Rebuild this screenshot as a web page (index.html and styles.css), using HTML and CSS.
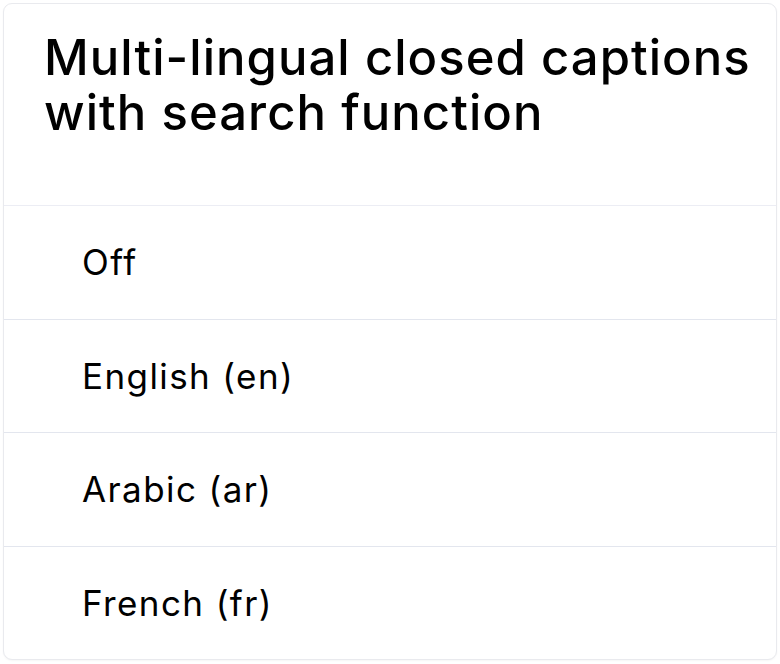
FILE: index.html
```html
<!DOCTYPE html>
<html lang="en">
<head>
    <meta charset="UTF-8">
    <meta name="viewport" content="width=device-width, initial-scale=1.0">
    <title>Closed Captions</title>
    <link rel="stylesheet" href="styles.css">
</head>
<body>
    <div class="card">
        <div class="card-header">
            <h1>Multi-lingual closed captions with search function</h1>
        </div>
        <ul class="caption-list">
            <li class="caption-item">Off</li>
            <li class="caption-item">English (en)</li>
            <li class="caption-item">Arabic (ar)</li>
            <li class="caption-item">French (fr)</li>
        </ul>
    </div>
</body>
</html>
```

FILE: styles.css
```css
body {
    font-family: Inter, "Open Sans", sans-serif;
    background-color: #fff;
    color: #000;
    margin: 0;
    padding: 3px;
}

.card {
    background: #fff;
    border: 1px solid #e9eaee;
    border-radius: 9px;
    box-shadow: 0 1px 2px rgba(0,0,0,0.04);
    height: 657px;
    box-sizing: border-box;
    display: flex;
    flex-direction: column;
    overflow: hidden;
}

.card-header {
    height: 202px;
    padding: 26px 10px 0 40px;
    box-sizing: border-box;
    border-bottom: 1px solid #ecedf4;
}

h1 {
    font-size: 49px;
    font-weight: 500;
    line-height: 55px;
    margin: 0;
    letter-spacing: 1.05px;
}

.caption-list {
    list-style: none;
    margin: 0;
    padding: 0;
    flex: 1;
    display: flex;
    flex-direction: column;
}

.caption-item {
    flex: 1;
    display: flex;
    align-items: center;
    padding-left: 78px;
    font-size: 35px;
    letter-spacing: 1.4px;
    border-bottom: 1px solid #e3e6ee;
}

.caption-item:last-child {
    border-bottom: none;
}
```
